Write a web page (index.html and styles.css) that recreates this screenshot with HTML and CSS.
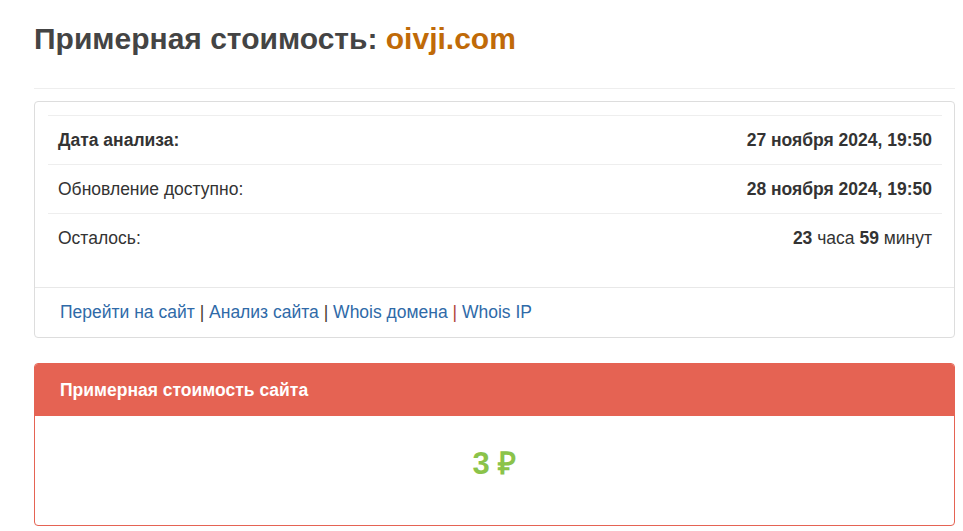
FILE: index.html
```html
<!DOCTYPE html>
<html lang="ru">
<head>
<meta charset="utf-8">
<title>Примерная стоимость: oivji.com</title>
<link rel="stylesheet" href="styles.css">
</head>
<body>
<div class="page">
  <h1 class="title">Примерная стоимость: <span class="domain">oivji.com</span></h1>
  <hr class="sep">
  <div class="panel">
    <div class="panel-body">
      <table class="info">
        <tr><th>Дата анализа:</th><td><b>27 ноября 2024, 19:50</b></td></tr>
        <tr><td class="label">Обновление доступно:</td><td><b>28 ноября 2024, 19:50</b></td></tr>
        <tr><td class="label">Осталось:</td><td><b>23</b> часа <b>59</b> минут</td></tr>
      </table>
    </div>
    <div class="panel-footer">
      <a href="#">Перейти на сайт</a> <span class="bar">|</span> <a href="#">Анализ сайта</a> <span class="bar">|</span> <a href="#">Whois домена</a> <span class="bar red">|</span> <a href="#">Whois IP</a>
    </div>
  </div>
  <div class="panel panel-red">
    <div class="panel-heading">Примерная стоимость сайта</div>
    <div class="panel-price">3 ₽</div>
  </div>
</div>
</body>
</html>
```
FILE: styles.css
```css
html, body {
  margin: 0;
  padding: 0;
  background: #fff;
}
body {
  font-family: "Liberation Sans", Arial, sans-serif;
  font-size: 17.5px;
  color: #333;
}
.page {
  width: 921px;
  padding: 20px 0 0 34px;
}
.title {
  margin: 0;
  font-size: 30px;
  line-height: 38px;
  font-weight: bold;
  color: #444;
}
.domain {
  color: #c06a08;
}
.sep {
  margin: 30px 0 12px;
  border: 0;
  border-top: 1px solid #eee;
  height: 0;
}
.panel {
  border: 1px solid #ddd;
  border-radius: 4px;
  background: #fff;
  margin-bottom: 25px;
}
.panel-body {
  padding: 13px 12px 25px 13px;
}
.info {
  width: 100%;
  border-collapse: collapse;
}
.info th, .info td {
  border-top: 1px solid #eee;
  padding: 12px 10px;
  line-height: 24px;
  text-align: left;
  font-weight: normal;
}
.info th {
  font-weight: bold;
}
.info td:last-child {
  text-align: right;
}
.panel-footer {
  border-top: 1px solid #e8e8e8;
  padding: 12px 25px 13px;
  line-height: 24px;
}
.panel-footer a {
  color: #2f6aa8;
  text-decoration: none;
}
.bar {
  color: #4a3a30;
}
.bar.red {
  color: #b0433a;
}
.panel-red {
  border-color: #e56353;
  border-radius: 4px;
}
.panel-heading {
  background: #e56353;
  color: #fff;
  font-weight: bold;
  padding: 14px 25px;
  line-height: 24px;
  border-radius: 3px 3px 0 0;
}
.panel-price {
  text-align: center;
  color: #8bc34a;
  font-size: 31px;
  font-weight: bold;
  padding: 28px 0 41px;
  line-height: 40px;
}
```
